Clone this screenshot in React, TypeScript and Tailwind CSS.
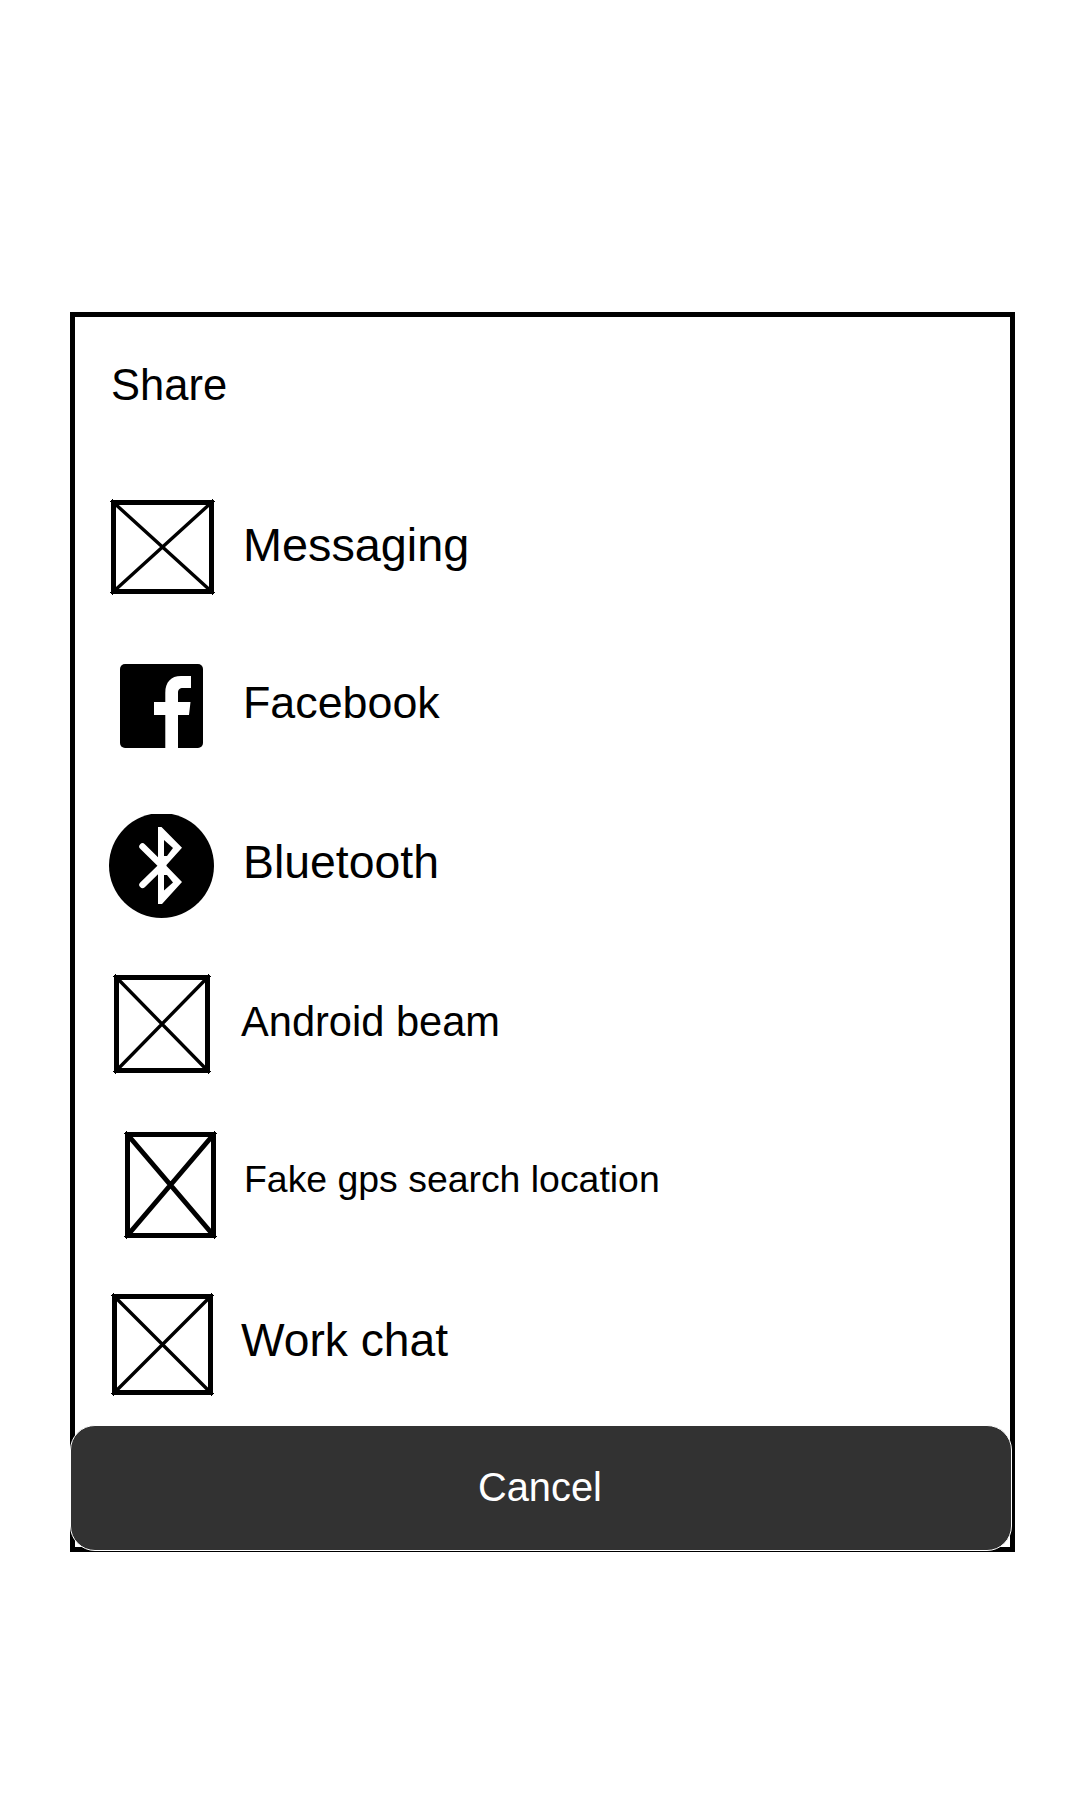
import React from "react";

type BoxProps = { w: number; h: number; diagonal: number; side?: number; className: string };

function CrossedBox({ w, h, diagonal, side = 5, className }: BoxProps) {
  return (
    <svg width={w} height={h} viewBox={`0 0 ${w} ${h}`} className={`block overflow-visible ${className}`} aria-hidden="true">
      <path d={`M0 0H${w}V${h}H0ZM${side} 5V${h - 5}H${w - side}V5Z`} fillRule="evenodd" />
      <path d={`M2 2L${w - 2} ${h - 2}M${w - 2} 2L2 ${h - 2}`} stroke="black" strokeWidth={diagonal} />
      <path d={`M-1 1.5H0M1.5 -1V0M${w} 1.5H${w + 1}M${w - 1.5} -1V0M-1 ${h - 1.5}H0M1.5 ${h}V${h + 1}M${w} ${h - 1.5}H${w + 1}M${w - 1.5} ${h}V${h + 1}`} stroke="black" strokeWidth="1" />
    </svg>
  );
}

function FacebookIcon({ className }: { className: string }) {
  return (
    <svg width="83" height="84" viewBox="0 0 83 84" className={`block ${className}`} aria-hidden="true">
      <rect width="83" height="84" rx="5" />
      <path fill="white" d="M45.3 84V51H34V38H45.3V29C45.3 18 51 12 61 12H71V24H63C59.5 24 58 25.5 58 29V38H70.5L69 51H58V84Z" />
    </svg>
  );
}

function BluetoothIcon({ className }: { className: string }) {
  return (
    <svg width="105" height="104" viewBox="0 0 105 104" className={`block ${className}`} aria-hidden="true">
      <circle cx="52.5" cy="51.5" r="52.5" />
      <path fill="white" d="M49 13H52.5L73 33.8L57 51.5L73 68L53 90H49Z" />
      <path stroke="white" strokeWidth="6.5" strokeLinecap="round" d="M33.5 32.5L53 51.8L33.5 70.8" fill="none" />
      <path d="M55 26L64 34L58 42H55ZM55 61H58L64 68.5L55 76.5Z" />
    </svg>
  );
}

const rows = [
  {
    label: "Messaging",
    row: "h-[160px]",
    icon: <CrossedBox w={103} h={94} diagonal={3.4} className="ml-[36px]" />,
    text: "mt-[20px] ml-px text-[46.8px]",
  },
  {
    label: "Facebook",
    row: "h-[150px]",
    icon: <FacebookIcon className="ml-[45px] mt-[4px]" />,
    text: "mt-[17px] ml-px text-[44.8px]",
  },
  {
    label: "Bluetooth",
    row: "h-[160px]",
    icon: <BluetoothIcon className="ml-[34px] mt-[4px]" />,
    text: "mt-[27px] ml-px text-[46.4px]",
  },
  {
    label: "Android beam",
    row: "h-[160px]",
    icon: <CrossedBox w={96} h={98} diagonal={3.4} className="ml-[39px] mt-[5px]" />,
    text: "mt-[27px] -ml-px text-[41.6px]",
  },
  {
    label: "Fake gps search location",
    row: "h-[160px]",
    icon: <CrossedBox w={91} h={106} diagonal={5} className="ml-[50px] mt-[2px]" />,
    text: "mt-[24px] ml-[2px] text-[37.4px]",
  },
  {
    label: "Work chat",
    row: "h-[135px]",
    icon: <CrossedBox w={101} h={101} diagonal={3.4} className="ml-[37px] mt-[4px]" />,
    text: "mt-[25px] -ml-px text-[46.2px]",
  },
];

export default function App() {
  return (
    <div className="h-[1800px] w-[1080px] bg-white pt-[312px] pl-[70px] font-['Liberation_Sans',Arial,sans-serif] text-black">
      <main className="flex h-[1240px] w-[945px] flex-col border-[5px] border-black">
        <header className="h-[183px] shrink-0 pt-[43px] pl-[36px]">
          <h1 className="text-[43.5px] leading-[50px]">Share</h1>
        </header>
        <ul className="shrink-0">
          {rows.map((r) => (
            <li key={r.label} className={`flex items-start ${r.row}`}>
              <div className="w-[167px] shrink-0">{r.icon}</div>
              <span className={`leading-[50px] whitespace-nowrap ${r.text}`}>{r.label}</span>
            </li>
          ))}
        </ul>
        <button className="-ml-[5px] flex h-[126px] w-[942px] shrink-0 items-start rounded-[25px] border border-white bg-[#323232] pt-[36px] pl-[407px] text-[39.8px] leading-[50px] text-white">
          Cancel
        </button>
      </main>
    </div>
  );
}
